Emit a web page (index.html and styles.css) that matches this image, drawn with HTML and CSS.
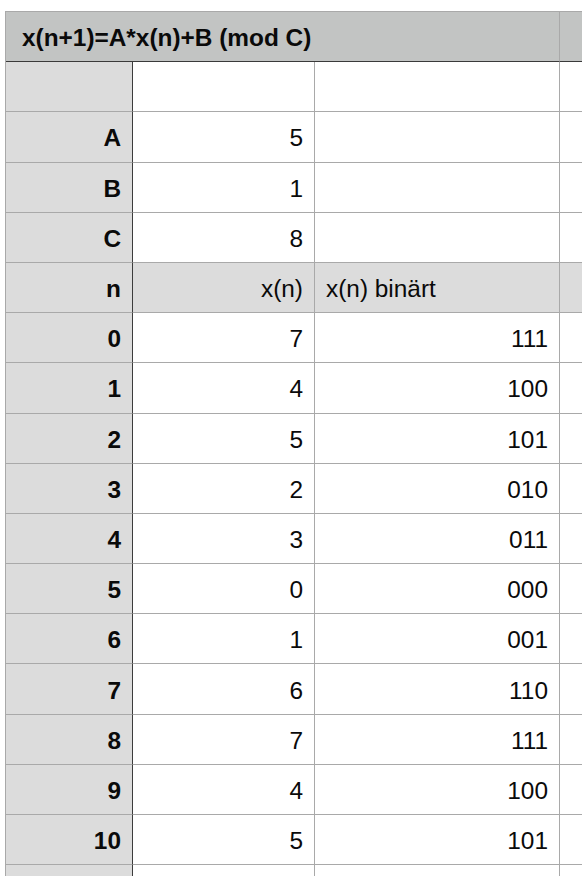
FILE: index.html
```html
<!DOCTYPE html>
<html lang="sv">
<head>
<meta charset="utf-8">
<title>x(n+1)=A*x(n)+B (mod C)</title>
<link rel="stylesheet" href="styles.css">
</head>
<body>
<div class="sheet">
  <div class="cell title">x(n+1)=A*x(n)+B (mod C)</div>
  <div class="cell title-extra"></div>

  <div class="cell rh"></div><div class="cell"></div><div class="cell"></div><div class="cell"></div>

  <div class="cell rh">A</div><div class="cell num">5</div><div class="cell"></div><div class="cell"></div>
  <div class="cell rh">B</div><div class="cell num">1</div><div class="cell"></div><div class="cell"></div>
  <div class="cell rh">C</div><div class="cell num">8</div><div class="cell"></div><div class="cell"></div>

  <div class="cell rh">n</div><div class="cell hdr num">x(n)</div><div class="cell hdr">x(n) binärt</div><div class="cell hdr"></div>

  <div class="cell rh">0</div><div class="cell num">7</div><div class="cell num">111</div><div class="cell"></div>
  <div class="cell rh">1</div><div class="cell num">4</div><div class="cell num">100</div><div class="cell"></div>
  <div class="cell rh">2</div><div class="cell num">5</div><div class="cell num">101</div><div class="cell"></div>
  <div class="cell rh">3</div><div class="cell num">2</div><div class="cell num">010</div><div class="cell"></div>
  <div class="cell rh">4</div><div class="cell num">3</div><div class="cell num">011</div><div class="cell"></div>
  <div class="cell rh">5</div><div class="cell num">0</div><div class="cell num">000</div><div class="cell"></div>
  <div class="cell rh">6</div><div class="cell num">1</div><div class="cell num">001</div><div class="cell"></div>
  <div class="cell rh">7</div><div class="cell num">6</div><div class="cell num">110</div><div class="cell"></div>
  <div class="cell rh">8</div><div class="cell num">7</div><div class="cell num">111</div><div class="cell"></div>
  <div class="cell rh">9</div><div class="cell num">4</div><div class="cell num">100</div><div class="cell"></div>
  <div class="cell rh">10</div><div class="cell num">5</div><div class="cell num">101</div><div class="cell"></div>

  <div class="cell rh"></div><div class="cell"></div><div class="cell"></div><div class="cell"></div>
</div>
</body>
</html>
```
FILE: styles.css
```css
html, body {
  margin: 0;
  padding: 0;
  background: #ffffff;
  overflow: hidden;
}
body {
  padding: 11px 0 0 5px;
  font-family: "Liberation Sans", Arial, Helvetica, sans-serif;
  font-size: 24.4px;
  color: #0a0a0a;
}
.sheet {
  display: grid;
  grid-template-columns: 127px 182px 245px 60px;
  grid-auto-rows: 50.2px;
  width: 614px;
  border-top: 1px solid #a9a9a9;
  border-left: 1px solid #a9a9a9;
}
.cell {
  box-sizing: border-box;
  display: flex;
  align-items: center;
  padding: 3px 11px 0;
  border-right: 1px solid #a9a9a9;
  border-bottom: 1px solid #a9a9a9;
  background: #ffffff;
  white-space: nowrap;
}
.title {
  grid-column: 1 / 4;
  background: #c2c4c3;
  font-weight: bold;
  padding-left: 16px;
  border-bottom: 1px solid #3a3a3a;
}
.title-extra {
  background: #c2c4c3;
  border-bottom: 1px solid #3a3a3a;
}
.rh {
  background: #dcdcdc;
  font-weight: bold;
  justify-content: flex-end;
  border-right: 1px solid #3c3c3c;
}
.hdr {
  background: #dcdcdc;
}
.num {
  justify-content: flex-end;
}
```
